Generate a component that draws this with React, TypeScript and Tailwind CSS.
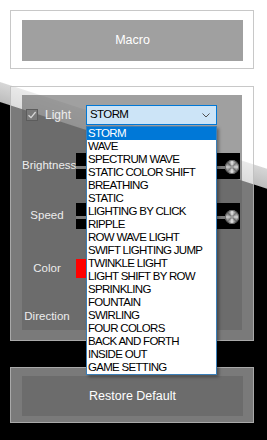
import React from "react";

const items = [
  "STORM",
  "WAVE",
  "SPECTRUM WAVE",
  "STATIC COLOR SHIFT",
  "BREATHING",
  "STATIC",
  "LIGHTING BY CLICK",
  "RIPPLE",
  "ROW WAVE LIGHT",
  "SWIFT LIGHTING JUMP",
  "TWINKLE LIGHT",
  "LIGHT SHIFT BY ROW",
  "SPRINKLING",
  "FOUNTAIN",
  "SWIRLING",
  "FOUR COLORS",
  "BACK AND FORTH",
  "INSIDE OUT",
  "GAME SETTING",
];

function Slider() {
  return (
    <div className="ml-[4px] w-[164px] h-[26px] bg-black flex items-center">
      <div className="flex-1 h-[3px] mt-[2px] bg-[#7c7c7c]" />
      <div className="w-[14px] h-[14px] mr-[1px] mt-[2px] rounded-full bg-[conic-gradient(#e8e8e8,#7a7a7a,#d8d8d8,#6a6a6a,#ececec,#7a7a7a,#d0d0d0,#6a6a6a,#e8e8e8)] shadow-[inset_0_0_0_1px_rgba(70,70,70,0.7)] flex items-center justify-center">
        <div className="w-[4px] h-[4px] rounded-full bg-[#9a9a9a]" />
      </div>
    </div>
  );
}

export default function App() {
  return (
    <div className="relative w-[267px] h-[440px] overflow-hidden bg-[linear-gradient(198deg,#ffffff_160px,#d6d6d6_161px,#bdbdbd_179px,#000000_180px)] font-['Liberation_Sans',Arial,sans-serif]">
      <div className="flex flex-col pl-[10px] pt-[10px]">
        {/* Macro */}
        <div className="w-[244px] h-[59px] border border-[rgba(184,184,184,0.77)] bg-[rgba(255,255,255,0.48)] pl-[11px] pt-[9px]">
          <div className="w-[221px] h-[41px] bg-[rgba(99,99,99,0.61)] flex items-center justify-center text-white text-[12.5px]">
            Macro
          </div>
        </div>

        {/* Light panel */}
        <div className="mt-[17px] w-[244px] h-[255px] border border-[rgba(184,184,184,0.77)] bg-[rgba(255,255,255,0.48)] pl-[11px] pt-[8px]">
          <div className="w-[220px] h-[235px] bg-[rgba(99,99,99,0.61)] flex flex-col text-[11.5px] text-[#ededed]">
            {/* row 1 */}
            <div className="mt-[10px] h-[20px] flex items-center">
              <div className="w-[64px] flex items-center">
                <div className="ml-[4px] w-[12px] h-[12px] border border-[#5c5c5c] bg-[#7a7a7a] flex items-center justify-center">
                  <svg width="10" height="10" viewBox="0 0 10 10">
                    <path d="M1.5 5.2 L4 7.6 L8.6 2" fill="none" stroke="#d8d8d8" strokeWidth="1.3" />
                  </svg>
                </div>
                <span className="ml-[7px] text-[12px]">Light</span>
              </div>
              <div className="relative">
                <div className="w-[131px] h-[20px] border border-[#0078d7] bg-[#cce4f7] flex items-center justify-between pl-[3px] pr-[6px] text-black text-[11.5px] tracking-[-0.6px]">
                  <span>STORM</span>
                  <svg width="8" height="5" viewBox="0 0 8 5">
                    <path d="M0.5 0.5 L4 4 L7.5 0.5" fill="none" stroke="#505050" strokeWidth="1" />
                  </svg>
                </div>
                <div className="absolute left-0 top-[21px] z-10 w-[131px] border border-[#3b7fb8] bg-white shadow-[2px_2px_3px_rgba(0,0,0,0.35)] text-black text-[11.5px] tracking-[-0.7px]">
                  {items.map((it, i) => (
                    <div
                      key={it}
                      className={
                        i === 0
                          ? "h-[13px] leading-[13px] pl-[1px] bg-[#0078d7] text-white"
                          : "h-[13px] leading-[13px] pl-[1px]"
                      }
                    >
                      {it}
                    </div>
                  ))}
                </div>
              </div>
            </div>

            {/* Brightness */}
            <div className="mt-[28px] h-[26px] flex items-center">
              <div className="w-[50px] text-center">Brightness</div>
              <Slider />
            </div>

            {/* Speed */}
            <div className="mt-[24px] h-[26px] flex items-center">
              <div className="w-[50px] text-center">Speed</div>
              <Slider />
            </div>

            {/* Color */}
            <div className="mt-[30px] h-[19px] flex items-center">
              <div className="w-[50px] text-center">Color</div>
              <div className="ml-[4px] w-[40px] h-[19px] bg-[#ff0000]" />
            </div>

            {/* Direction */}
            <div className="mt-[29px] h-[20px] flex items-center">
              <div className="w-[50px] text-center">Direction</div>
            </div>
          </div>
        </div>

        {/* Restore */}
        <div className="mt-[26px] w-[244px] h-[56px] border border-[rgba(184,184,184,0.77)] bg-[rgba(255,255,255,0.48)] pl-[11px] pt-[8px]">
          <div className="w-[221px] h-[40px] bg-[rgba(99,99,99,0.61)] flex items-center justify-center text-white text-[12.5px]">
            Restore Default
          </div>
        </div>
      </div>
    </div>
  );
}
